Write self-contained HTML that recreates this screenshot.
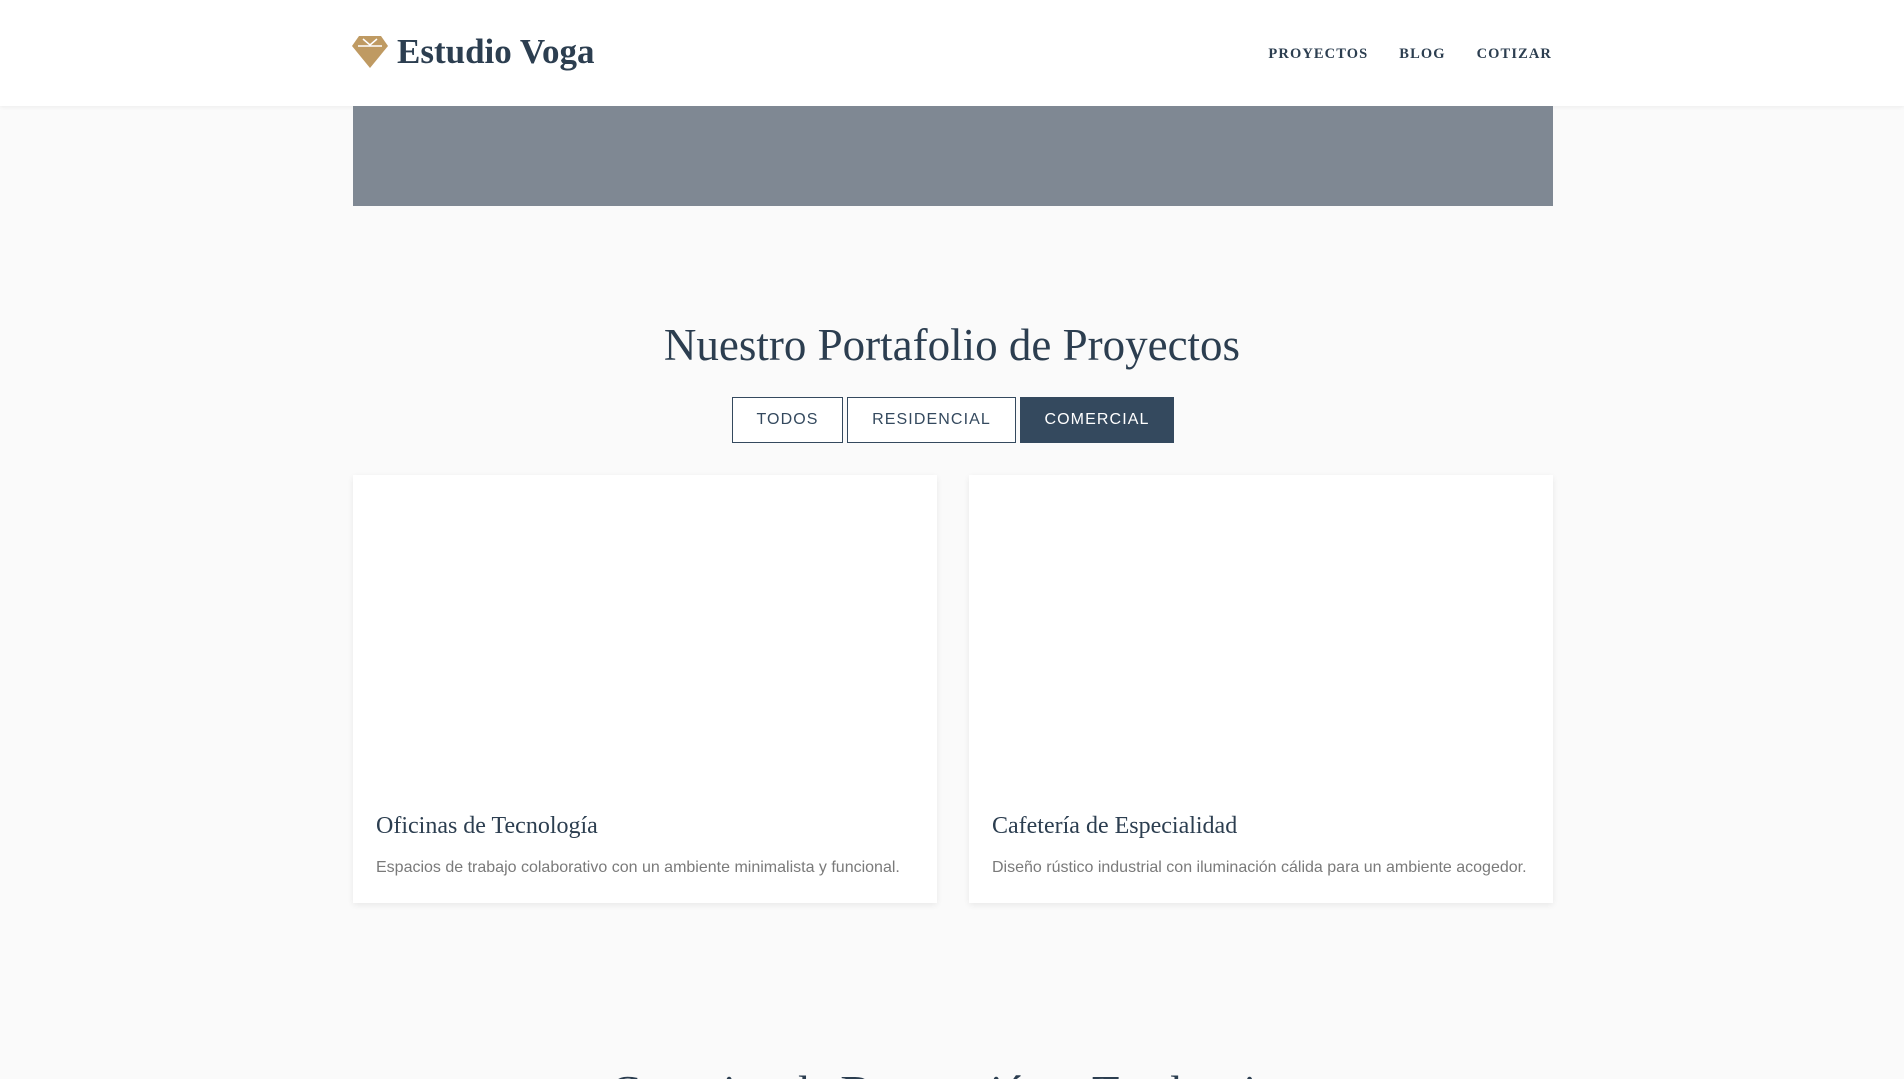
<!DOCTYPE html>
<html style="overflow:hidden"><head><meta charset="utf-8"><style>
*{margin:0;padding:0;box-sizing:border-box}
html,body{width:1904px;height:1079px;overflow:hidden}
body{background:#fafafa;font-family:"Liberation Sans",sans-serif;color:#2c3e50;position:relative}
header{position:absolute;left:0;top:0;width:1904px;height:106px;background:#fff;box-shadow:0 1px 4px rgba(0,0,0,.06)}
.logo{position:absolute;left:352px;top:32px;display:flex;align-items:center}
.logo span{font-family:"Liberation Serif",serif;font-weight:bold;font-size:35px;color:#2c3e50;margin-left:9px}
nav{position:absolute;right:352px;top:46px;display:flex;gap:31px}
nav a{font-family:"Liberation Serif",serif;font-weight:bold;font-size:14.5px;letter-spacing:1.1px;color:#2c3e50;text-decoration:none}
.banner{position:absolute;left:353px;top:106px;width:1200px;height:100px;background:#7f8893}
h2{position:absolute;left:0;width:1904px;text-align:center;font-family:"Liberation Serif",serif;font-weight:normal;font-size:45px;color:#2c3e50}
.btns{position:absolute;top:397px;left:732px;display:flex;gap:4px}
.btns div{height:46px;line-height:44px;border:1px solid #34495e;background:#fff;font-size:16px;letter-spacing:1.1px;color:#34495e;text-align:center}
.btns .on{background:#34495e;color:#fff}
.card{position:absolute;top:475px;width:584px;height:428px;background:#fff;box-shadow:0 2px 6px rgba(0,0,0,.07)}
.card h3{position:absolute;left:23px;top:338px;font-family:"Liberation Serif",serif;font-weight:normal;font-size:24px;color:#2c3e50}
.card p{position:absolute;left:23px;top:384px;font-size:16px;color:#7a7a7a;white-space:nowrap}
</style></head><body>
<header>
<div class="logo"><svg width="36" height="34" viewBox="0 0 36 34"><path d="M7 1H29L36 11L18 33L0 11Z" fill="#bf9a62"/><path d="M6 11H30" stroke="#fff" stroke-width="1.5"/><path d="M11 4L18 10L25 4" stroke="#fff" stroke-width="1.5" fill="none"/></svg><span>Estudio Voga</span></div>
<nav><a>PROYECTOS</a><a>BLOG</a><a>COTIZAR</a></nav>
</header>
<div class="banner"></div>
<h2 style="top:319px">Nuestro Portafolio de Proyectos</h2>
<div class="btns"><div style="width:111px">TODOS</div><div style="width:169px">RESIDENCIAL</div><div class="on" style="width:154px">COMERCIAL</div></div>
<div class="card" style="left:353px"><h3>Oficinas de Tecnología</h3><p>Espacios de trabajo colaborativo con un ambiente minimalista y funcional.</p></div>
<div class="card" style="left:969px"><h3>Cafetería de Especialidad</h3><p>Diseño rústico industrial con iluminación cálida para un ambiente acogedor.</p></div>
<h2 style="top:1066px">Consejos de Decoración y Tendencias</h2>
</body></html>
